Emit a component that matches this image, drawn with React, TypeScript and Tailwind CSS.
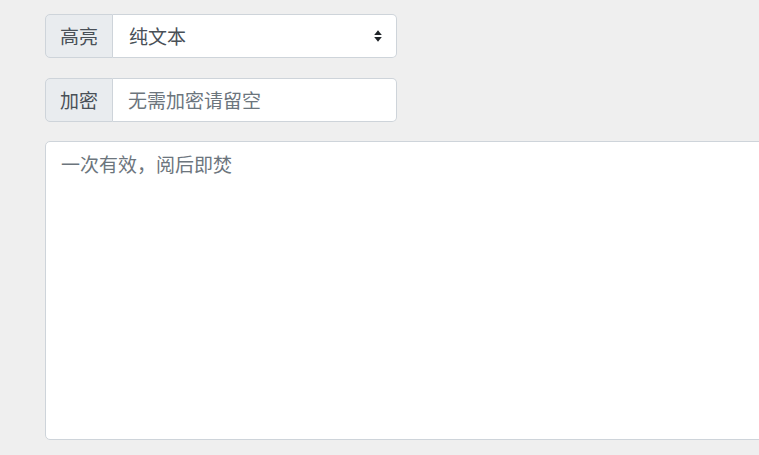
import React from "react";

const font = { fontFamily: '"Noto Sans CJK SC", "Noto Sans", sans-serif' };

function Arrows() {
  return (
    <svg width="8" height="12" viewBox="0 0 8 12" className="text-[#212529]">
      <path d="M4 0.3 L7.8 5 L0.2 5 Z" fill="currentColor" />
      <path d="M4 11.7 L7.8 7 L0.2 7 Z" fill="currentColor" />
    </svg>
  );
}

export default function App() {
  return (
    <div
      className="w-[759px] h-[455px] overflow-hidden bg-[#efefef] pt-[14px] pl-[45px]"
      style={font}
    >
      <div className="flex w-[352px] h-[44px] text-[19px] leading-[1.5]">
        <div className="flex items-center px-[14px] bg-[#e9ecef] border border-[#ced4da] rounded-l-[5px] text-[#495057]">
          高亮
        </div>
        <div className="flex flex-1 items-center justify-between bg-white border border-l-0 border-[#ced4da] rounded-r-[5px] pl-[16px] pr-[14px] text-[#495057]">
          <span>纯文本</span>
          <Arrows />
        </div>
      </div>

      <div className="flex w-[352px] h-[44px] mt-[20px] text-[19px] leading-[1.5]">
        <div className="flex items-center px-[14px] bg-[#e9ecef] border border-[#ced4da] rounded-l-[5px] text-[#495057]">
          加密
        </div>
        <input
          className="flex-1 min-w-0 bg-white border border-l-0 border-[#ced4da] rounded-r-[5px] pl-[15px] text-[19px] text-[#495057] placeholder:text-[#6c757d] outline-none"
          style={font}
          placeholder="无需加密请留空"
        />
      </div>

      <textarea
        className="block mt-[19px] w-[780px] h-[299px] resize-none bg-white border border-[#ced4da] rounded-[5px] px-[15px] pt-[8px] text-[19px] leading-[1.5] text-[#495057] placeholder:text-[#6c757d] outline-none"
        style={font}
        placeholder="一次有效，阅后即焚"
      />
    </div>
  );
}
